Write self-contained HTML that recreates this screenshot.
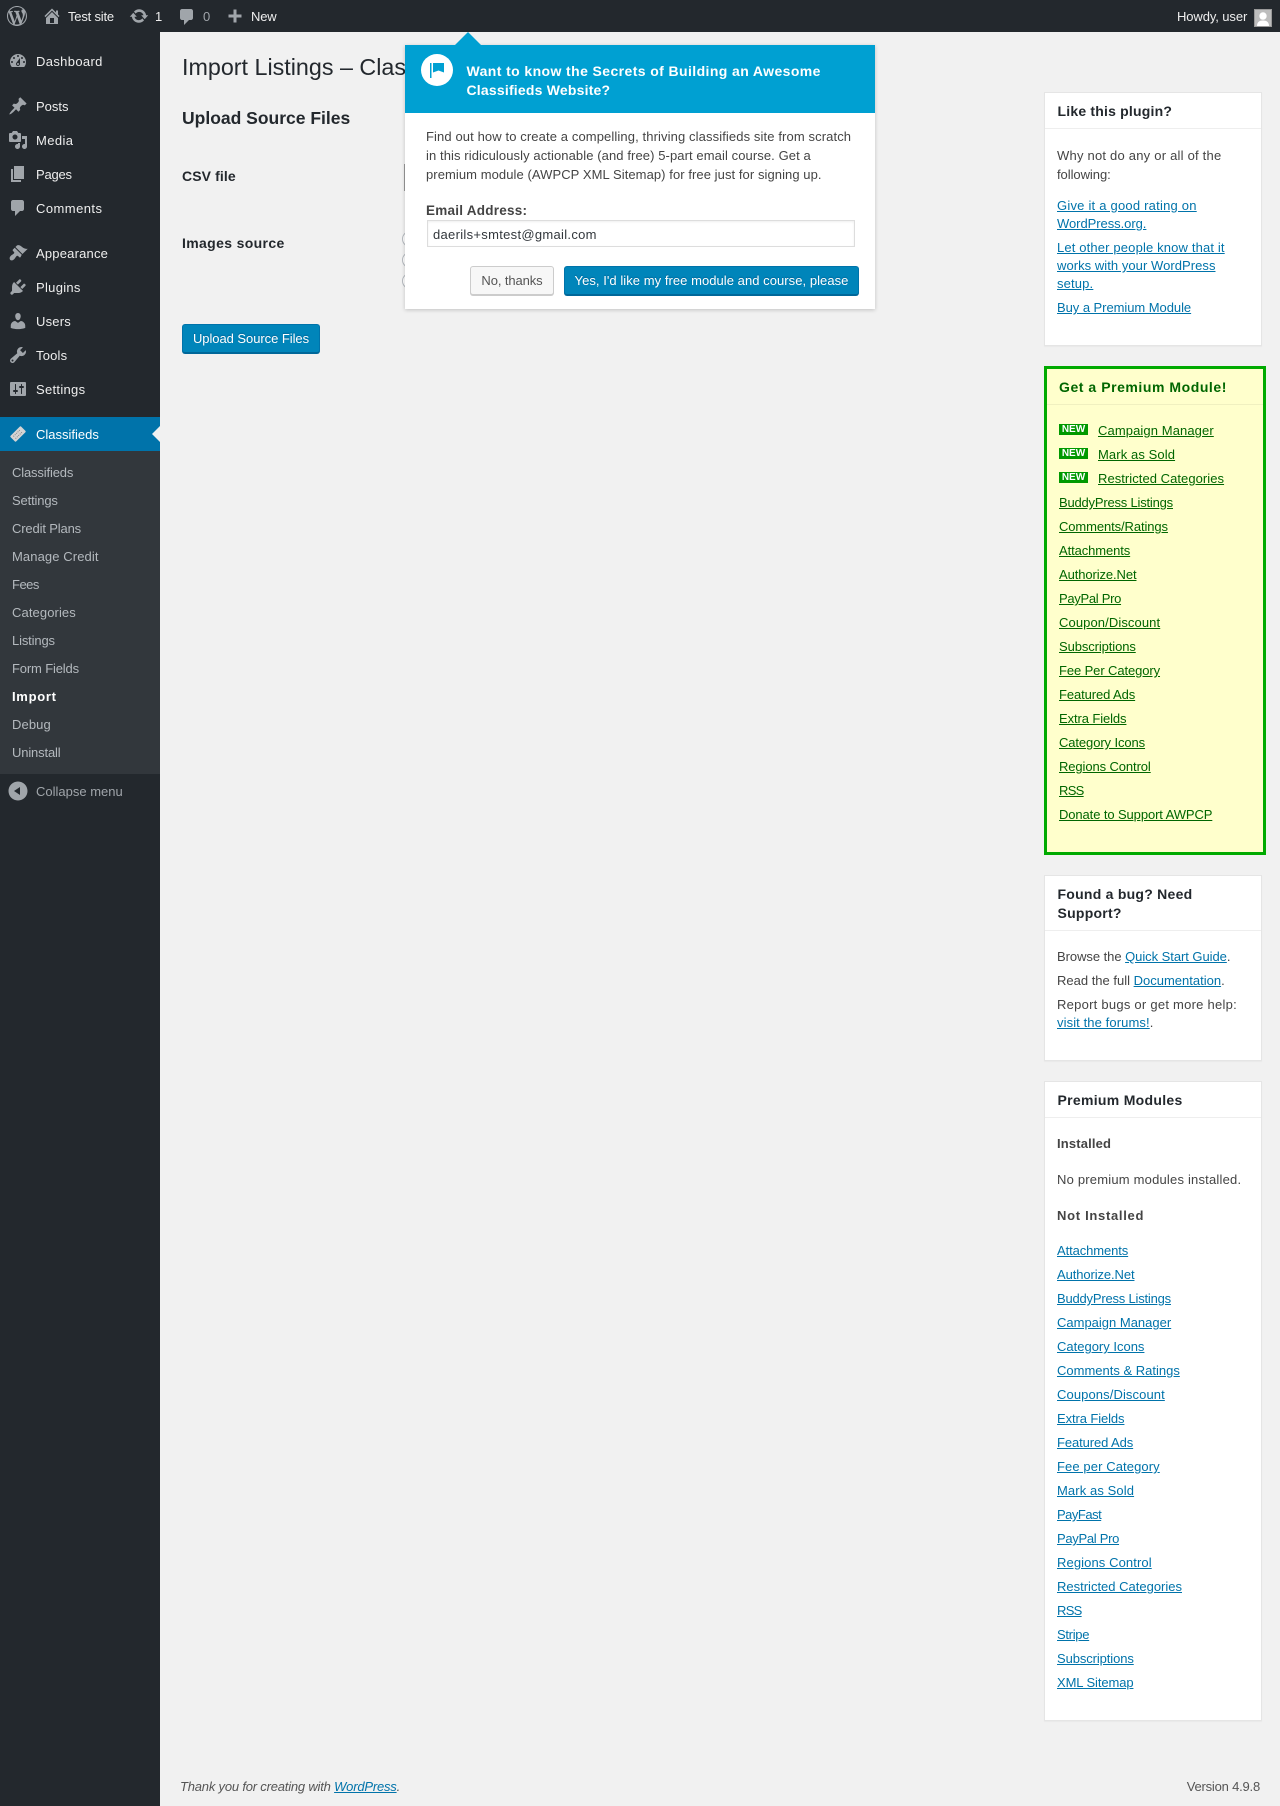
<!DOCTYPE html>
<html lang="en"><head><meta charset="utf-8"><title>Import Listings</title>
<style>
html,body{margin:0;padding:0}
body{position:relative;width:1280px;height:1806px;overflow:hidden;background:#f1f1f1;font-family:"Liberation Sans",Arial,sans-serif;font-size:13px;color:#444}
a{color:#0073aa;text-decoration:underline}
.t{position:absolute;white-space:nowrap;line-height:20px;height:20px}
.abs{position:absolute}
#bar{position:absolute;left:0;top:0;width:1280px;height:32px;background:#23282d;z-index:5}
#bar .t{color:#eee;letter-spacing:-.2px}
#side{position:absolute;left:0;top:32px;width:160px;height:1774px;background:#23282d}
.ic{position:absolute;width:20px;height:20px;fill:#a0a5aa}
.m{position:absolute;left:36px;color:#eee;white-space:nowrap;line-height:20px;letter-spacing:.15px}
.s{position:absolute;left:12px;color:#b4b9be;white-space:nowrap;line-height:20px;letter-spacing:-.15px}
.card{position:absolute;left:1044px;width:216px;background:#fff;border:1px solid #e5e5e5;box-shadow:0 1px 1px rgba(0,0,0,.04)}
.ln{position:absolute;left:0;right:0;height:1px;background:#eee}
.h{position:absolute;left:1057.500px;font-weight:bold;font-size:14px;color:#23282d;letter-spacing:.25px;white-space:nowrap;line-height:20px}
.p{position:absolute;left:1057px;white-space:nowrap;line-height:20px;color:#444;letter-spacing:-.05px}
.list{position:absolute}
.list a{display:block;height:24px;line-height:24px;white-space:nowrap;letter-spacing:-.1px}
.g a{color:#060}
.new{position:absolute;left:1059px;width:29px;height:11px;background:#090;color:#fff;font-size:10px;font-weight:bold;line-height:11px;text-align:center}
.btn{position:absolute;box-sizing:border-box;border-radius:3px;text-align:center;white-space:nowrap;font-size:13px;letter-spacing:-.1px}
.pri{background:#0085ba;border:1px solid #0073aa;border-bottom-color:#006799;box-shadow:0 1px 0 #006799;color:#fff;text-shadow:0 -1px 1px #006799}
.sec{background:#f7f7f7;border:1px solid #ccc;box-shadow:0 1px 0 #ccc;color:#555}
</style></head><body>

<div id="bar">
<svg class="ic" style="left:7px;top:6px" viewBox="0 0 20 20"><path d="M20 10c0-5.51-4.49-10-10-10C4.48 0 0 4.49 0 10c0 5.52 4.48 10 10 10 5.51 0 10-4.48 10-10zM7.78 15.37L4.37 6.22c.55-.02 1.17-.08 1.17-.08.5-.06.44-1.13-.06-1.11 0 0-1.45.11-2.37.11-.18 0-.37 0-.58-.01C4.12 2.69 6.89 1.06 10 1.06c2.32 0 4.43.87 6.03 2.32-.68-.11-1.65.39-1.65 1.58 0 .74.45 1.36.9 2.1.35.61.55 1.36.55 2.46 0 1.49-1.4 5-1.4 5l-3.03-8.37c.54-.02.82-.17.82-.17.5-.05.44-1.25-.06-1.22 0 0-1.44.12-2.38.12-.87 0-2.33-.12-2.33-.12-.5-.03-.56 1.2-.06 1.22l.92.08 1.26 3.41zM17.41 10c.24-.64.74-1.87.43-4.25.7 1.29 1.05 2.71 1.05 4.25 0 3.29-1.73 6.24-4.4 7.78.97-2.59 1.94-5.2 2.92-7.78zM6.1 18.09C3.12 16.65 1.06 13.57 1.06 10c0-1.31.23-2.51.72-3.63zm4.03-6.98l2.57 6.96c.1.02.01-.02.01-.02-.86.3-1.79.48-2.75.48-.79 0-1.57-.12-2.3-.33z"/></svg>
<svg class="ic" style="left:42px;top:6px" viewBox="0 0 20 20"><path d="M16 8.5l1.53 1.53-1.06 1.06L10 4.62l-6.47 6.47-1.06-1.06L10 2.5l4 4v-2h2v4zm-6-2.46l6 5.99V18H4v-5.97zM12 17v-5H8v5h4z"/></svg>
<div class="t" style="left:68px;top:7px">Test site</div>
<svg class="ic" style="left:129px;top:6px" viewBox="0 0 20 20"><path d="M10.2 3.28c3.53 0 6.43 2.61 6.92 6h2.08l-3.5 4-3.5-4h2.32c-.45-1.97-2.21-3.44-4.32-3.44-1.45 0-2.73.71-3.54 1.78L4.95 5.66C6.23 4.2 8.11 3.28 10.2 3.28zm-.4 13.44c-3.52 0-6.43-2.61-6.92-6H.8l3.5-4c1.17 1.33 2.33 2.67 3.5 4H5.48c.45 1.97 2.21 3.44 4.32 3.44 1.45 0 2.73-.71 3.54-1.78l1.71 1.95c-1.28 1.46-3.15 2.39-5.25 2.39z"/></svg>
<div class="t" style="left:155px;top:7px">1</div>
<svg class="ic" style="left:177px;top:7px" viewBox="0 0 20 20"><path d="M5 2h9c1.1 0 2 .9 2 2v7c0 1.1-.9 2-2 2h-2l-5 5v-5H5c-1.1 0-2-.9-2-2V4c0-1.1.9-2 2-2z"/></svg>
<div class="t" style="left:203px;top:7px;color:#a0a5aa">0</div>
<svg class="ic" style="left:225px;top:6px" viewBox="0 0 20 20"><path d="M16.500 8.500v3h-5v5h-3v-5h-5v-3h5v-5h3v5z"/></svg>
<div class="t" style="left:251px;top:7px">New</div>
<div class="t" style="left:1177px;top:7px;letter-spacing:-.1px">Howdy, user</div>
<svg class="abs" style="left:1254px;top:9px" width="18" height="18" viewBox="0 0 18 18"><rect width="18" height="18" fill="#bdbdbd"/><rect x=".5" y=".5" width="17" height="17" fill="none" stroke="#999"/><circle cx="9" cy="7" r="3.700" fill="#fff"/><path d="M3 17c0-4 2.500-5.500 6-5.500s6 1.500 6 5.500z" fill="#fff"/></svg>
</div>

<div id="side"></div>
<svg class="ic" style="left:8px;top:51px" viewBox="0 0 20 20"><path d="M3.76 16h12.48c1.1-1.37 1.76-3.11 1.76-5 0-4.42-3.58-8-8-8s-8 3.58-8 8c0 1.89.66 3.63 1.76 5zM10 4c.55 0 1 .45 1 1s-.45 1-1 1-1-.45-1-1 .45-1 1-1zM6 6c.55 0 1 .45 1 1s-.45 1-1 1-1-.45-1-1 .45-1 1-1zm8 0c.55 0 1 .45 1 1s-.45 1-1 1-1-.45-1-1 .45-1 1-1zm-5.37 5.55L12 7v6c0 1.1-.9 2-2 2s-2-.9-2-2c0-.57.24-1.08.63-1.45zM4 10c.55 0 1 .45 1 1s-.45 1-1 1-1-.45-1-1 .45-1 1-1zm12 0c.55 0 1 .45 1 1s-.45 1-1 1-1-.45-1-1 .45-1 1-1zm-5 3c0-.55-.45-1-1-1s-1 .45-1 1 .45 1 1 1 1-.45 1-1z" fill-rule="evenodd"/></svg>
<div class="m" style="top:52px;letter-spacing:.35px">Dashboard</div>
<svg class="ic" style="left:8px;top:96px" viewBox="0 0 20 20"><path d="M10.44 3.02l1.82-1.82 6.36 6.35-1.83 1.82c-1.05-.68-2.48-.57-3.41.36l-.75.75c-.92.93-1.04 2.35-.35 3.41l-1.83 1.82-2.41-2.41-2.8 2.79c-.42.42-3.38 2.71-3.8 2.29s1.86-3.39 2.28-3.81l2.79-2.79L4.1 9.36l1.83-1.82c1.05.69 2.48.57 3.4-.36l.75-.75c.93-.92 1.05-2.35.36-3.41z"/></svg>
<div class="m" style="top:97px;letter-spacing:0">Posts</div>
<svg class="ic" style="left:8px;top:130px" viewBox="0 0 20 20"><path d="M13 11V4c0-.55-.45-1-1-1h-1.67L9 1H5L3.67 3H2c-.55 0-1 .45-1 1v7c0 .55.45 1 1 1h10c.55 0 1-.45 1-1zM7 4.5c1.38 0 2.5 1.12 2.5 2.5S8.38 9.5 7 9.5 4.5 8.38 4.5 7 5.62 4.5 7 4.5zM14 6h5v10.5c0 1.38-1.12 2.5-2.5 2.5S14 17.88 14 16.5s1.12-2.5 2.5-2.5c.17 0 .34.02.5.05V9h-3V6zm-4 8.05V13h2v3.5c0 1.38-1.12 2.5-2.5 2.5S7 17.88 7 16.5 8.12 14 9.5 14c.17 0 .34.02.5.05z" fill-rule="evenodd"/></svg>
<div class="m" style="top:131px;letter-spacing:.4px">Media</div>
<svg class="ic" style="left:8px;top:164px" viewBox="0 0 20 20"><path d="M6 15V2h10v13H6zm-1 1h8v2H3V5h2v11z"/></svg>
<div class="m" style="top:165px;letter-spacing:-.2px">Pages</div>
<svg class="ic" style="left:8px;top:198px" viewBox="0 0 20 20"><path d="M5 2h9c1.1 0 2 .9 2 2v7c0 1.1-.9 2-2 2h-2l-5 5v-5H5c-1.1 0-2-.9-2-2V4c0-1.1.9-2 2-2z"/></svg>
<div class="m" style="top:199px;letter-spacing:.45px">Comments</div>
<svg class="ic" style="left:8px;top:243px" viewBox="0 0 20 20"><path d="M14.48 11.06L7.41 3.99l1.5-1.5c.5-.56 2.3-.47 3.51.32 1.21.8 1.43 1.28 2.91 2.1 1.18.64 2.45 1.26 4.45.85zm-.71.71L6.7 4.7 4.93 6.47c-.39.39-.39 1.02 0 1.41l1.06 1.06c.39.39.39 1.03 0 1.42-.6.6-1.43 1.11-2.21 1.69-.35.26-.7.53-1.01.84-1.43 1.43-1.4 3.02-.58 3.94.82.82 2.51.85 3.94-.58.31-.31.58-.66.84-1.01.58-.78 1.09-1.61 1.69-2.21.39-.39 1.03-.39 1.42 0l1.06 1.06c.39.39 1.02.39 1.41 0z"/></svg>
<div class="m" style="top:244px;letter-spacing:.2px">Appearance</div>
<svg class="ic" style="left:8px;top:277px" viewBox="0 0 20 20"><path d="M13.11 4.36L9.87 7.6 8 5.73l3.24-3.24c.35-.34 1.05-.2 1.56.32.52.51.66 1.21.31 1.55zm-8 1.77l.91-1.12 9.01 9.01-1.19.84c-.71.71-2.63 1.16-3.82 1.16H6.14L4.9 17.26c-.59.59-1.54.59-2.12 0-.59-.58-.59-1.53 0-2.12l1.24-1.24v-3.88c0-1.13.4-3.13 1.09-3.89zm7.26 3.97l3.24-3.24c.34-.35 1.04-.21 1.55.31.52.51.66 1.21.31 1.55l-3.24 3.25z"/></svg>
<div class="m" style="top:278px;letter-spacing:.3px">Plugins</div>
<svg class="ic" style="left:8px;top:311px" viewBox="0 0 20 20"><path d="M10 9.25c-2.27 0-2.73-3.44-2.73-3.44C7 4.02 7.82 2 9.97 2c2.16 0 2.98 2.02 2.71 3.81 0 0-.41 3.44-2.68 3.44zm0 2.57L12.72 10c2.39 0 4.52 2.33 4.52 4.53v2.49s-3.65 1.13-7.24 1.13c-3.65 0-7.24-1.13-7.24-1.13v-2.49c0-2.25 1.94-4.48 4.47-4.48z"/></svg>
<div class="m" style="top:312px;letter-spacing:.2px">Users</div>
<svg class="ic" style="left:8px;top:345px" viewBox="0 0 20 20"><path d="M16.68 9.77c-1.34 1.34-3.3 1.67-4.95.99l-5.41 6.52c-.99.99-2.59.99-3.57 0-.99-.98-.99-2.58 0-3.57l6.52-5.42c-.68-1.65-.35-3.61.99-4.95 1.28-1.28 3.12-1.62 4.72-1.06l-2.89 2.89 2.82 2.82 2.86-2.87c.53 1.58.18 3.39-1.09 4.67zM3.81 16.21c.4.39 1.03.39 1.42 0 .4-.4.4-1.03 0-1.43-.39-.39-1.02-.39-1.42 0-.39.4-.39 1.03 0 1.43z" fill-rule="evenodd"/></svg>
<div class="m" style="top:346px;letter-spacing:.2px">Tools</div>
<svg class="ic" style="left:8px;top:379px" viewBox="0 0 20 20"><path d="M18 16V4c0-.55-.45-1-1-1H3c-.55 0-1 .45-1 1v12c0 .55.45 1 1 1h14c.55 0 1-.45 1-1zM8 11h1c.55 0 1 .45 1 1s-.45 1-1 1H8v1.5c0 .28-.22.5-.5.5s-.5-.22-.5-.5V13H6c-.55 0-1-.45-1-1s.45-1 1-1h1V5.5c0-.28.22-.5.5-.5s.5.22.5.5V11zm5-2h-1c-.55 0-1-.45-1-1s.45-1 1-1h1V5.5c0-.28.22-.5.5-.5s.5.22.5.5V7h1c.55 0 1 .45 1 1s-.45 1-1 1h-1v5.5c0 .28-.22.5-.5.5s-.5-.22-.5-.5V9z" fill-rule="evenodd"/></svg>
<div class="m" style="top:380px;letter-spacing:.3px">Settings</div>

<div class="abs" style="left:0;top:417px;width:160px;height:34px;background:#0073aa"></div>
<div class="abs" style="left:152px;top:426px;width:0;height:0;border:8px solid transparent;border-left:0;border-right-color:#f1f1f1"></div>
<svg class="ic" style="left:8px;top:424px" viewBox="0 0 20 20"><g transform="rotate(-45 10 10)"><rect x="2.500" y="6" width="15" height="8" rx="1" fill="#d4d4d4"/><path d="M5 8.500h10M5 11.500h10" stroke="#888" stroke-width="1" stroke-dasharray="1 1"/></g></svg>
<div class="m" style="top:425px;color:#fff;letter-spacing:0">Classifieds</div>

<div class="abs" style="left:0;top:451px;width:160px;height:323px;background:#32373c"></div>
<div class="s" style="top:463px">Classifieds</div>
<div class="s" style="top:491px">Settings</div>
<div class="s" style="top:519px">Credit Plans</div>
<div class="s" style="top:547px;letter-spacing:.1px">Manage Credit</div>
<div class="s" style="top:575px;letter-spacing:-.5px">Fees</div>
<div class="s" style="top:603px;letter-spacing:.1px">Categories</div>
<div class="s" style="top:631px">Listings</div>
<div class="s" style="top:659px">Form Fields</div>
<div class="s" style="top:687px;color:#fff;font-weight:bold;letter-spacing:.7px">Import</div>
<div class="s" style="top:715px;letter-spacing:.1px">Debug</div>
<div class="s" style="top:743px">Uninstall</div>
<svg class="ic" style="left:8px;top:781px" viewBox="0 0 20 20"><path d="M10 .5c5.25 0 9.500 4.250 9.500 9.500s-4.250 9.500-9.500 9.500S.5 15.250.5 10 4.750.5 10 .5zM12 14V6l-6 4z" fill-rule="evenodd"/></svg>
<div class="m" style="top:782px;color:#a0a5aa;letter-spacing:0">Collapse menu</div>

<div class="t" style="left:182px;top:52px;height:30px;line-height:30px;font-size:23.300px;color:#23282d;width:300px;overflow:hidden">Import Listings – Classifieds</div>
<div class="t" style="left:182px;top:108px;font-size:17.500px;font-weight:bold;color:#23282d">Upload Source Files</div>
<div class="t" style="left:182px;top:166px;font-size:14px;font-weight:bold;color:#23282d;letter-spacing:.1px">CSV file</div>
<div class="t" style="left:182px;top:233px;font-size:14px;font-weight:bold;color:#23282d;letter-spacing:.35px">Images source</div>
<div class="abs" style="left:404px;top:164px;width:1px;height:27px;background:#999"></div>
<div class="abs" style="left:402px;top:231px;width:14px;height:14px;border:1px solid #b4b9be;border-radius:50%;background:#fff"></div>
<div class="abs" style="left:402px;top:252px;width:14px;height:14px;border:1px solid #b4b9be;border-radius:50%;background:#fff"></div>
<div class="abs" style="left:402px;top:273px;width:14px;height:14px;border:1px solid #b4b9be;border-radius:50%;background:#fff"></div>
<div class="btn pri" style="left:182px;top:324px;width:138px;height:29px;line-height:27px;letter-spacing:-.05px">Upload Source Files</div>

<div class="abs" style="left:405px;top:45px;width:470px;height:264px;background:#fff;box-shadow:0 1px 4px rgba(0,0,0,.2)"></div>
<div class="abs" style="left:405px;top:45px;width:470px;height:68px;background:#00a0d2"></div>
<div class="abs" style="left:455px;top:32px;width:0;height:0;border:13px solid transparent;border-top:0;border-bottom-color:#00a0d2"></div>
<svg class="abs" style="left:421px;top:54px" width="32" height="32" viewBox="0 0 32 32"><circle cx="16" cy="16" r="16" fill="#fff"/><rect x="9" y="9" width="1.500" height="15" fill="#00a0d2"/><path d="M12 9h11v9.500l-5.500-2-5.500 2z" fill="#00a0d2"/></svg>
<div class="t" style="left:466.500px;top:61px;font-size:14px;font-weight:bold;color:#fff;letter-spacing:.4px">Want to know the Secrets of Building an Awesome</div>
<div class="t" style="left:466.500px;top:80px;font-size:14px;font-weight:bold;color:#fff;letter-spacing:.2px">Classifieds Website?</div>
<div class="t" style="left:426px;top:127px;letter-spacing:.11px">Find out how to create a compelling, thriving classifieds site from scratch</div>
<div class="t" style="left:426px;top:146px;letter-spacing:.09px">in this ridiculously actionable (and free) 5-part email course. Get a</div>
<div class="t" style="left:426px;top:165px;letter-spacing:.07px">premium module (AWPCP XML Sitemap) for free just for signing up.</div>
<div class="t" style="left:426px;top:201px;font-weight:bold;font-size:13.500px;letter-spacing:.25px">Email Address:</div>
<div class="abs" style="box-sizing:border-box;left:427px;top:220px;width:428px;height:27px;background:#fff;border:1px solid #ddd;box-shadow:inset 0 1px 2px rgba(0,0,0,.07)"></div>
<div class="t" style="left:433px;top:225px;color:#32373c;letter-spacing:.3px">daerils+smtest@gmail.com</div>
<div class="btn sec" style="left:470px;top:266px;width:84px;height:29px;line-height:27px">No, thanks</div>
<div class="btn pri" style="left:564px;top:266px;width:295px;height:29px;line-height:27px;letter-spacing:.05px">Yes, I'd like my free module and course, please</div>

<div class="card" style="top:92px;height:252px"><div class="ln" style="top:35px"></div></div>
<div class="h" style="top:101px;letter-spacing:.2px">Like this plugin?</div>
<div class="p" style="top:146px;letter-spacing:.22px">Why not do any or all of the</div>
<div class="p" style="top:165px">following:</div>
<div class="p" style="top:196px;letter-spacing:.22px"><a>Give it a good rating on</a></div>
<div class="p" style="top:214px"><a>WordPress.org.</a></div>
<div class="p" style="top:238px;letter-spacing:.15px"><a>Let other people know that it</a></div>
<div class="p" style="top:256px;letter-spacing:.05px"><a>works with your WordPress</a></div>
<div class="p" style="top:274px;letter-spacing:.15px"><a>setup.</a></div>
<div class="p" style="top:298px"><a>Buy a Premium Module</a></div>

<div class="abs" style="left:1044px;top:366px;width:216px;height:483px;border:3px solid #0a0;background:#ffc"></div>
<div class="abs" style="left:1047px;top:404px;width:216px;height:1px;background:#f0f0c0"></div>
<div class="h" style="left:1059px;top:377px;color:#060;letter-spacing:.55px">Get a Premium Module!</div>
<div class="new" style="top:424px">NEW</div><div class="new" style="top:448px">NEW</div><div class="new" style="top:472px">NEW</div>
<div class="list g" style="left:1098px;top:419px">
<a style="letter-spacing:.1px">Campaign Manager</a><a style="letter-spacing:.1px">Mark as Sold</a><a style="letter-spacing:.05px">Restricted Categories</a></div>
<div class="list g" style="left:1059px;top:491px">
<a style="letter-spacing:-.2px">BuddyPress Listings</a><a>Comments/Ratings</a><a>Attachments</a><a>Authorize.Net</a><a style="letter-spacing:-.3px">PayPal Pro</a><a style="letter-spacing:.1px">Coupon/Discount</a><a>Subscriptions</a><a>Fee Per Category</a><a>Featured Ads</a><a>Extra Fields</a><a>Category Icons</a><a>Regions Control</a><a style="letter-spacing:-.7px">RSS</a><a>Donate to Support AWPCP</a></div>

<div class="card" style="top:875px;height:184px"><div class="ln" style="top:54px"></div></div>
<div class="h" style="top:884px">Found a bug? Need</div>
<div class="h" style="top:903px">Support?</div>
<div class="p" style="top:947px">Browse the <a>Quick Start Guide</a>.</div>
<div class="p" style="top:971px;letter-spacing:0">Read the full <a>Documentation</a>.</div>
<div class="p" style="top:995px;letter-spacing:.25px">Report bugs or get more help:</div>
<div class="p" style="top:1013px;letter-spacing:.1px"><a>visit the forums!</a>.</div>

<div class="card" style="top:1081px;height:638px"><div class="ln" style="top:35px"></div></div>
<div class="h" style="top:1090px;letter-spacing:.3px">Premium Modules</div>
<div class="p" style="top:1134px;font-weight:bold;letter-spacing:.15px">Installed</div>
<div class="p" style="top:1170px;letter-spacing:.2px">No premium modules installed.</div>
<div class="p" style="top:1206px;font-weight:bold;letter-spacing:.7px">Not Installed</div>
<div class="list" style="left:1057px;top:1239px">
<a>Attachments</a><a>Authorize.Net</a><a style="letter-spacing:-.2px">BuddyPress Listings</a><a style="letter-spacing:0">Campaign Manager</a><a style="letter-spacing:0">Category Icons</a><a style="letter-spacing:0">Comments &amp; Ratings</a><a style="letter-spacing:.1px">Coupons/Discount</a><a>Extra Fields</a><a>Featured Ads</a><a style="letter-spacing:.1px">Fee per Category</a><a style="letter-spacing:.1px">Mark as Sold</a><a style="letter-spacing:-.5px">PayFast</a><a style="letter-spacing:-.3px">PayPal Pro</a><a style="letter-spacing:.1px">Regions Control</a><a style="letter-spacing:0">Restricted Categories</a><a style="letter-spacing:-.7px">RSS</a><a style="letter-spacing:-.3px">Stripe</a><a>Subscriptions</a><a>XML Sitemap</a></div>

<div class="t" style="left:180px;top:1777px;color:#555;font-style:italic;letter-spacing:-.2px">Thank you for creating with <a>WordPress</a>.</div>
<div class="t" style="right:20px;top:1777px;color:#555;letter-spacing:-.2px">Version 4.9.8</div>
</body></html>
